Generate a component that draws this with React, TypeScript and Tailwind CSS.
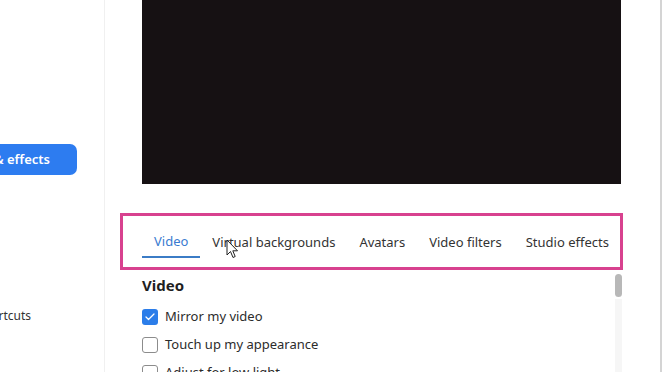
import { Check } from "lucide-react";

const tabs = ["Video", "Virtual backgrounds", "Avatars", "Video filters", "Studio effects"];

function Box({ checked, label }: { checked?: boolean; label: string }) {
  return (
    <div className="flex items-center gap-[7px] h-[28px] shrink-0">
      {checked ? (
        <span className="w-[16px] h-[16px] rounded-[3px] bg-[#2b7de9] flex items-center justify-center">
          <Check size={12} strokeWidth={2.5} className="text-white" />
        </span>
      ) : (
        <span className="w-[16px] h-[16px] rounded-[3px] border border-[#8c8c8c] bg-white" />
      )}
      <span className="text-[13px] text-[#2c2c2c]">{label}</span>
    </div>
  );
}

export default function App() {
  return (
    <div
      className="relative flex w-[662px] h-[372px] overflow-hidden bg-white"
      style={{ fontFamily: '"Noto Sans", "Open Sans", sans-serif' }}
    >
      {/* left nav, scrolled so only the right part shows */}
      <div className="w-[105px] shrink-0 border-r border-[#f0f0f0] flex flex-col">
        <div className="mt-[144px] shrink-0 w-[77px] h-[31px] rounded-r-[7px] bg-[#2d7cf0] flex items-center justify-end pr-[27px] overflow-hidden whitespace-nowrap">
          <span className="text-[13px] font-semibold text-white">Background &amp; effects</span>
        </div>
        <div className="mt-[131px] shrink-0 w-[60px] h-[20px] flex items-center justify-end pr-[29px] overflow-hidden whitespace-nowrap">
          <span className="text-[12px] text-[#333]">Keyboard shortcuts</span>
        </div>
      </div>

      <div className="flex-1 flex flex-col border-r-2 border-[#d4d4d4] overflow-hidden">
        <div className="ml-[37px] shrink-0 w-[479px] h-[184px] bg-[#161113]" />

        <div className="mt-[29px] ml-[15px] shrink-0 w-[503px] h-[57px] border-[3px] border-[#d8418f] flex items-start pl-[19px] pt-[12px]">
          {tabs.map((t, i) => (
            <div
              key={t}
              className={
                "px-3 h-[30px] flex items-center text-[13px] whitespace-nowrap " +
                (i === 0 ? "text-[#3a7bd0] border-b-2 border-[#3b7cc6]" : "text-[#333]")
              }
            >
              {t}
            </div>
          ))}
        </div>

        <div className="flex shrink-0 h-[120px]">
          <div className="ml-[37px] w-[472px] flex flex-col">
            <div className="mt-[4px] shrink-0 h-[22px] flex items-center text-[15px] font-bold text-[#1f1f1f]">Video</div>
            <div className="mt-[7px] flex flex-col">
              <Box checked label="Mirror my video" />
              <Box label="Touch up my appearance" />
              <Box label="Adjust for low light" />
            </div>
          </div>
          <div className="w-[8px] flex flex-col items-center pt-[4px]">
            <div className="w-[7px] h-[23px] shrink-0 rounded-full bg-[#b8b8b8]" />
            <div className="w-[7px] flex-1 bg-[#f6f6f6] mt-[2px]" />
          </div>
        </div>
      </div>

      {/* mouse pointer over the tabs */}
      <svg className="absolute left-[226px] top-[239px]" width="13" height="20" viewBox="0 0 13 20">
        <path d="M1 1 L1 16 L4.5 12.5 L7 18.5 L9.2 17.5 L6.8 11.8 L11.5 11.8 Z" fill="white" stroke="#222" strokeWidth="1" strokeLinejoin="round" />
      </svg>
    </div>
  );
}
